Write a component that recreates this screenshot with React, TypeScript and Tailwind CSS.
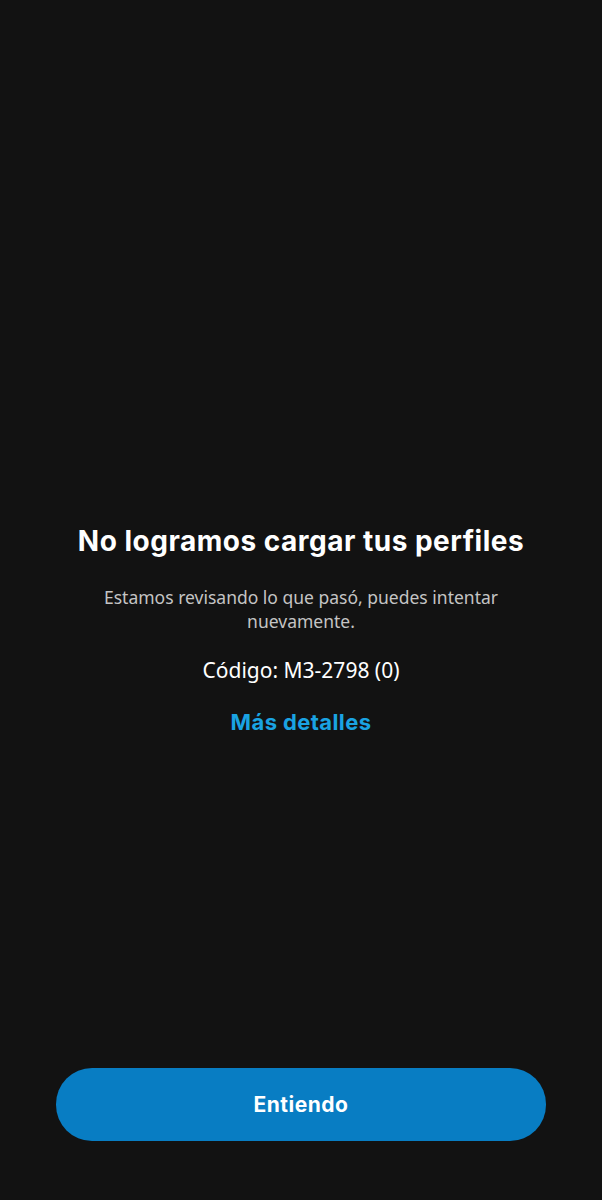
import React from "react";

export default function App() {
  return (
    <div className="w-[602px] h-[1200px] bg-[#121212] flex flex-col items-center overflow-hidden">
      <div className="flex flex-col items-center pt-[523px] w-full">
        <h1 className="font-['Inter','Noto_Sans',sans-serif] text-white text-[28px] font-bold leading-[36px] tracking-[0.5px]">
          No logramos cargar tus perfiles
        </h1>
        <p className="font-['Noto_Sans','Open_Sans',sans-serif] mt-[26px] text-[#c4c4c4] text-[17.5px] leading-[24px] text-center w-[430px]">
          Estamos revisando lo que pasó, puedes intentar nuevamente.
        </p>
        <p className="font-['Noto_Sans','Open_Sans',sans-serif] mt-[23px] text-white text-[21px] leading-[28px]">
          Código: M3-2798 (0)
        </p>
        <button className="font-['Inter','Noto_Sans',sans-serif] mt-[24px] text-[#1aa3e2] text-[22px] font-bold leading-[28px] tracking-[0.4px]">
          Más detalles
        </button>
      </div>
      <div className="flex-1" />
      <button className="font-['Inter','Noto_Sans',sans-serif] mb-[59px] w-[490px] h-[73px] rounded-[36px] bg-[#087dc3] text-white text-[21px] font-bold tracking-[0.5px]">
        Entiendo
      </button>
    </div>
  );
}
